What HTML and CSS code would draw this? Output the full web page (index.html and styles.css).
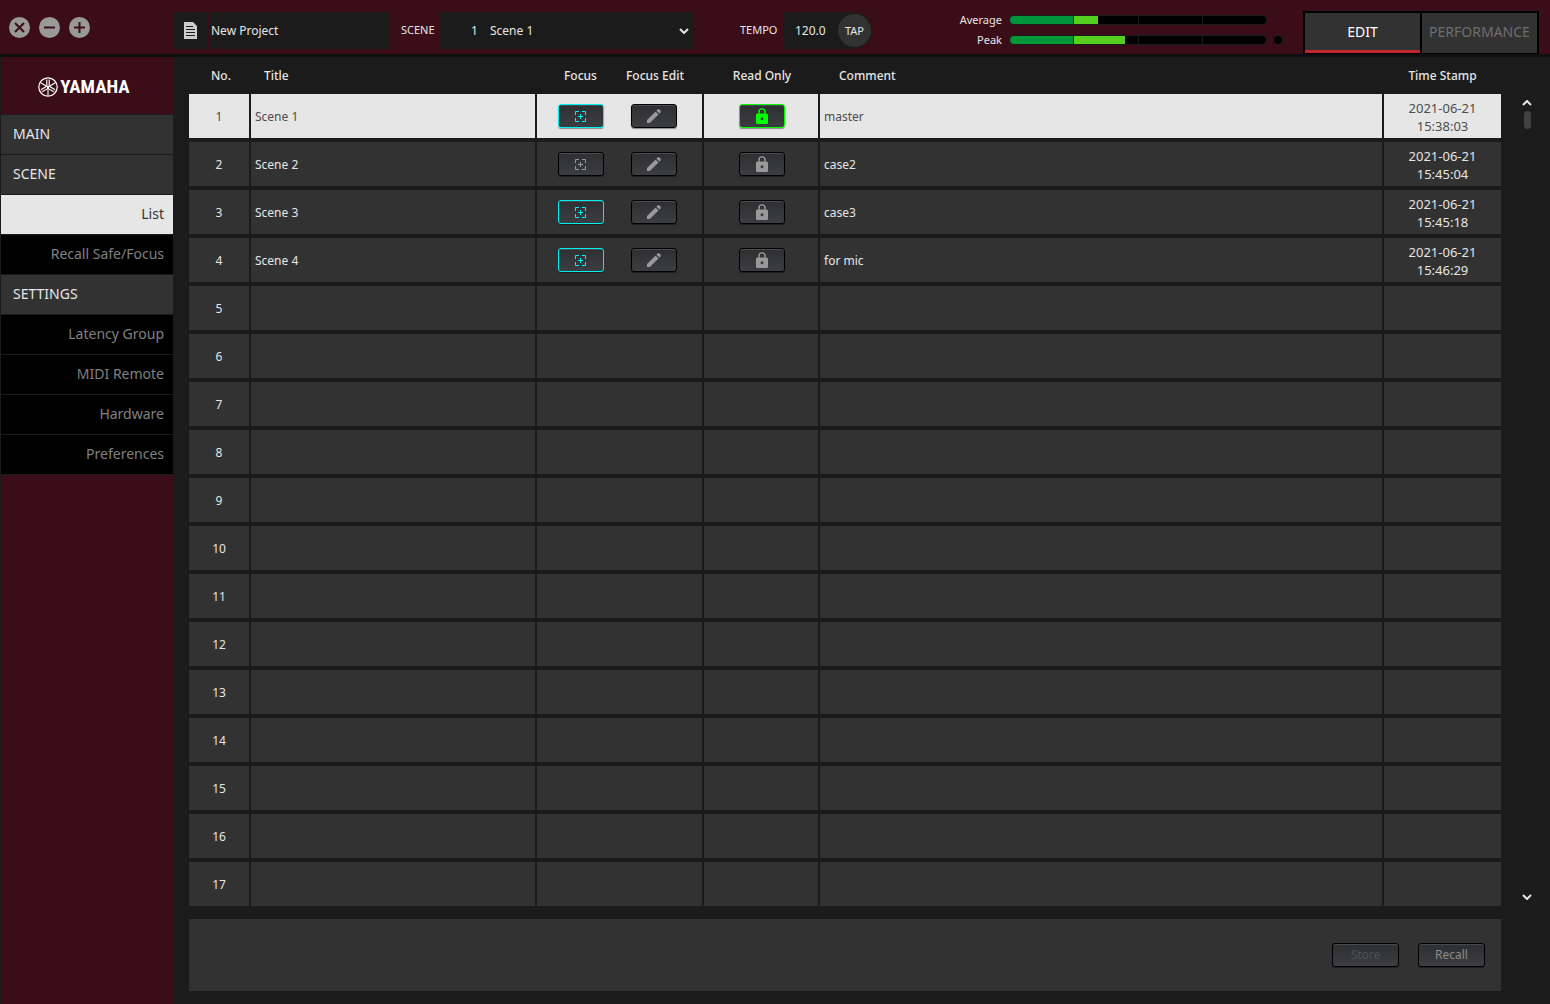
FILE: index.html
```html
<!DOCTYPE html>
<html lang="en">
<head>
<meta charset="utf-8">
<title>Scene List</title>
<link rel="stylesheet" href="styles.css">
</head>
<body>
<svg class="defs" aria-hidden="true">
  <symbol id="focus" viewBox="0 -1 12 12"><path d="M.5 4V.5H4M7 .5h3.500V4M10.500 7v3.500H7M4 10.500H.5V7M5.500 3v5M3 5.500h5" fill="none" stroke="currentColor"/></symbol>
  <symbol id="pen" viewBox="3 3 18 18"><path d="M3 17.250V21h3.750L17.810 9.940l-3.750-3.750zM20.710 7.040a1 1 0 0 0 0-1.410l-2.340-2.340a1 1 0 0 0-1.410 0l-1.830 1.830 3.750 3.750z" fill="currentColor"/></symbol>
  <symbol id="lock" viewBox="4 1 16 21"><path d="M18 8h-1V6A5 5 0 0 0 7 6v2H6a2 2 0 0 0-2 2v10c0 1.100.9 2 2 2h12a2 2 0 0 0 2-2V10a2 2 0 0 0-2-2zm-6 9a2 2 0 1 1 0-4 2 2 0 0 1 0 4zm3.100-9H8.900V6a3.100 3.100 0 0 1 6.200 0z" fill="currentColor"/></symbol>
  <symbol id="down" viewBox="0 0 10 6"><path d="M1 1l4 4 4-4" fill="none" stroke="currentColor" stroke-width="2"/></symbol>
  <symbol id="up" viewBox="0 0 10 6"><path d="M1 5l4-4 4 4" fill="none" stroke="currentColor" stroke-width="2"/></symbol>
  <symbol id="fork" viewBox="0 0 20 20"><path d="M10 10v8.500M8.800 2.500v5.800q0 1.500 1.200 1.500t1.200-1.500V2.500" fill="none" stroke="currentColor" stroke-width="1.100"/></symbol>
</svg>

<header class="topbar">
  <div class="window-controls">
    <button class="round" aria-label="Close"><svg viewBox="0 0 21 21"><path d="M6 6l9 9M15 6l-9 9"/></svg></button>
    <button class="round" aria-label="Minimize"><svg viewBox="0 0 21 21"><path d="M5 10.500h11"/></svg></button>
    <button class="round" aria-label="Maximize"><svg viewBox="0 0 21 21"><path d="M5 10.500h11M10.500 5v11"/></svg></button>
  </div>
  <div class="project">
    <button class="file" aria-label="Project file"><svg viewBox="0 0 13 17"><path d="M0 0h9l4 4v13H0z" fill="#ccc"/><path d="M2 4.500h7M2 7.500h9M2 10.500h9M2 13.500h9" stroke="#1b1b1b"/></svg></button>
    <input class="project-name" type="text" value="New Project" aria-label="Project name">
  </div>
  <label class="bar-label" for="scene">SCENE</label>
  <div class="scene-box">
    <span class="scene-no">1</span>
    <select id="scene"><option>Scene 1</option><option>Scene 2</option><option>Scene 3</option><option>Scene 4</option></select>
    <svg class="chevron"><use href="#down"/></svg>
  </div>
  <label class="bar-label tempo-label" for="tempo">TEMPO</label>
  <div class="tempo-box">
    <input id="tempo" type="text" value="120.0">
    <button class="tap">TAP</button>
  </div>
  <div class="meters">
    <span class="meter-name">Average</span>
    <div class="meter"><i class="seg full"></i><i class="seg"><b style="width:37%"></b></i><i class="seg"></i><i class="seg"></i></div>
    <span></span>
    <span class="meter-name">Peak</span>
    <div class="meter"><i class="seg full"></i><i class="seg"><b style="width:80%"></b></i><i class="seg"></i><i class="seg"></i></div>
    <span class="clip"></span>
  </div>
  <div class="modes">
    <button class="mode active">EDIT</button>
    <button class="mode">PERFORMANCE</button>
  </div>
</header>

<div class="body">
  <nav class="sidebar">
    <div class="logo">
      <svg viewBox="0 0 20 20"><circle cx="10" cy="10" r="9.200" fill="none" stroke="#fff" stroke-width="1.200"/><use href="#fork" width="20" height="20"/><use href="#fork" width="20" height="20" transform="rotate(120 10 10)"/><use href="#fork" width="20" height="20" transform="rotate(240 10 10)"/></svg>
      <span>YAMAHA</span>
    </div>
    <a class="group" href="#">MAIN</a>
    <a class="group" href="#">SCENE</a>
    <a class="item current" href="#">List</a>
    <a class="item" href="#">Recall Safe/Focus</a>
    <a class="group" href="#">SETTINGS</a>
    <a class="item" href="#">Latency Group</a>
    <a class="item" href="#">MIDI Remote</a>
    <a class="item" href="#">Hardware</a>
    <a class="item" href="#">Preferences</a>
  </nav>

  <main class="content">
    <div class="list">
      <table class="scenes">
        <colgroup><col class="c-no"><col class="c-title"><col class="c-focus"><col class="c-edit"><col class="c-ro"><col><col class="c-time"></colgroup>
        <thead>
          <tr><th class="no">No.</th><th class="title">Title</th><th class="focus">Focus</th><th class="edit">Focus Edit</th><th>Read Only</th><th class="comment">Comment</th><th>Time Stamp</th></tr>
        </thead>
        <tbody>
          <tr class="selected"><td>1</td><td class="text">Scene 1</td>
            <td class="focus"><button class="key on" aria-label="Focus"><svg class="i-focus"><use href="#focus"/></svg></button></td>
            <td class="edit"><button class="key" aria-label="Focus edit"><svg class="i-pen"><use href="#pen"/></svg></button></td>
            <td class="read-only"><button class="key locked" aria-label="Read only"><svg class="i-lock"><use href="#lock"/></svg></button></td>
            <td class="text">master</td><td class="last">2021-06-21<br>15:38:03</td></tr>
          <tr><td>2</td><td class="text">Scene 2</td>
            <td class="focus"><button class="key" aria-label="Focus"><svg class="i-focus"><use href="#focus"/></svg></button></td>
            <td class="edit"><button class="key" aria-label="Focus edit"><svg class="i-pen"><use href="#pen"/></svg></button></td>
            <td class="read-only"><button class="key" aria-label="Read only"><svg class="i-lock"><use href="#lock"/></svg></button></td>
            <td class="text">case2</td><td class="last">2021-06-21<br>15:45:04</td></tr>
          <tr><td>3</td><td class="text">Scene 3</td>
            <td class="focus"><button class="key on" aria-label="Focus"><svg class="i-focus"><use href="#focus"/></svg></button></td>
            <td class="edit"><button class="key" aria-label="Focus edit"><svg class="i-pen"><use href="#pen"/></svg></button></td>
            <td class="read-only"><button class="key" aria-label="Read only"><svg class="i-lock"><use href="#lock"/></svg></button></td>
            <td class="text">case3</td><td class="last">2021-06-21<br>15:45:18</td></tr>
          <tr><td>4</td><td class="text">Scene 4</td>
            <td class="focus"><button class="key on" aria-label="Focus"><svg class="i-focus"><use href="#focus"/></svg></button></td>
            <td class="edit"><button class="key" aria-label="Focus edit"><svg class="i-pen"><use href="#pen"/></svg></button></td>
            <td class="read-only"><button class="key" aria-label="Read only"><svg class="i-lock"><use href="#lock"/></svg></button></td>
            <td class="text">for mic</td><td class="last">2021-06-21<br>15:46:29</td></tr>
          <tr><td>5</td><td></td><td class="focus"></td><td></td><td></td><td></td><td class="last"></td></tr>
          <tr><td>6</td><td></td><td class="focus"></td><td></td><td></td><td></td><td class="last"></td></tr>
          <tr><td>7</td><td></td><td class="focus"></td><td></td><td></td><td></td><td class="last"></td></tr>
          <tr><td>8</td><td></td><td class="focus"></td><td></td><td></td><td></td><td class="last"></td></tr>
          <tr><td>9</td><td></td><td class="focus"></td><td></td><td></td><td></td><td class="last"></td></tr>
          <tr><td>10</td><td></td><td class="focus"></td><td></td><td></td><td></td><td class="last"></td></tr>
          <tr><td>11</td><td></td><td class="focus"></td><td></td><td></td><td></td><td class="last"></td></tr>
          <tr><td>12</td><td></td><td class="focus"></td><td></td><td></td><td></td><td class="last"></td></tr>
          <tr><td>13</td><td></td><td class="focus"></td><td></td><td></td><td></td><td class="last"></td></tr>
          <tr><td>14</td><td></td><td class="focus"></td><td></td><td></td><td></td><td class="last"></td></tr>
          <tr><td>15</td><td></td><td class="focus"></td><td></td><td></td><td></td><td class="last"></td></tr>
          <tr><td>16</td><td></td><td class="focus"></td><td></td><td></td><td></td><td class="last"></td></tr>
          <tr><td>17</td><td></td><td class="focus"></td><td></td><td></td><td></td><td class="last"></td></tr>
        </tbody>
      </table>
      <div class="scroll">
        <button class="arrow" aria-label="Scroll up"><svg><use href="#up"/></svg></button>
        <span class="thumb"></span>
        <button class="arrow end" aria-label="Scroll down"><svg><use href="#down"/></svg></button>
      </div>
    </div>
    <footer class="actions">
      <button class="key wide" disabled>Store</button>
      <button class="key wide">Recall</button>
    </footer>
  </main>
</div>
</body>
</html>
```
FILE: styles.css
```css
* { box-sizing: border-box; }

body {
  margin: 0;
  min-height: 100vh;
  display: flex;
  flex-direction: column;
  background: #1b1b1b;
  color: #e6e6e6;
  font: 12px/18px "Noto Sans", "Open Sans", sans-serif;
}

button, input, select {
  font: inherit;
  color: inherit;
  border: 0;
  padding: 0;
  margin: 0;
  background: none;
}

a { color: inherit; text-decoration: none; }
svg { display: block; }
.defs { position: absolute; width: 0; height: 0; }

/* Top bar */
.topbar {
  display: flex;
  align-items: flex-start;
  height: 57px;
  padding: 11px 11px 0 9px;
  background: #3b0d18;
  border-bottom: 3px solid #0f0f0f;
}

.window-controls { display: flex; gap: 9px; width: 164px; padding-top: 6px; }
.round { width: 21px; height: 21px; border-radius: 50%; background: #999; }
.round svg { width: 21px; height: 21px; fill: none; stroke: #3b0d18; stroke-width: 2; }

.project, .scene-box, .bar-label, .tempo-box { margin-top: 1px; }

.project { display: flex; gap: 2px; width: 216px; height: 37px; }
.file { display: grid; place-items: center; width: 35px; background: #1b1b1b; }
.file svg { width: 13px; height: 17px; }
.project-name { flex: 1; min-width: 0; padding-left: 1px; background: #1b1b1b; }

.bar-label { width: 51px; padding-left: 12px; line-height: 36px; font-size: 11px; }
.scene-box {
  display: flex;
  align-items: center;
  width: 253px;
  height: 37px;
  padding-right: 4px;
  background: #1b1b1b;
}
.scene-no { width: 50px; padding-left: 31px; }
#scene { flex: 1; appearance: none; }
.chevron { width: 10px; height: 6px; }

.tempo-label { width: 90px; padding-left: 47px; }
.tempo-box {
  display: flex;
  align-items: center;
  justify-content: space-between;
  width: 89px;
  height: 37px;
  padding: 0 1px 0 12px;
  background: #1b1b1b;
  border-radius: 0 19px 19px 0;
}
#tempo { width: 40px; }
.tap { width: 33px; height: 33px; border-radius: 50%; background: #323232; font-size: 11px; }

.meters {
  display: grid;
  grid-template-columns: auto 256px 8px;
  gap: 2px 8px;
  align-items: center;
  margin-left: auto;
}
.meter-name { text-align: right; font-size: 11px; }
.meter {
  display: flex;
  gap: 1px;
  height: 8px;
  border-radius: 4px;
  overflow: hidden;
  background: #1b1b1b;
  box-shadow: 0 0 0 1px #1b1b1b;
}
.seg { flex: 1; background: #000; }
.seg b { display: block; height: 8px; background: #57cf1f; }
.seg.full { background: #00953b; }
.clip { width: 8px; height: 8px; border-radius: 50%; background: #000; box-shadow: 0 0 0 1px #1b1b1b; }

.modes {
  display: flex;
  gap: 2px;
  width: 236px;
  height: 43px;
  margin-left: 21px;
  padding: 2px 2px 1px;
  background: #000;
}
.mode { flex: 1 1 0; min-width: 0; background: #323232; border-bottom: 3px solid #323232; font-size: 14px; color: #6e6e6e; }
.mode.active { border-color: #c1272d; color: #fff; }

/* Body */
.body { flex: 1; display: flex; }

.sidebar {
  display: flex;
  flex-direction: column;
  gap: 1px;
  width: 174px;
  padding-right: 1px;
  border-left: 1px solid #1b1b1b;
  background: #3b0d18;
}
.logo {
  display: flex;
  align-items: center;
  justify-content: center;
  gap: 2px;
  height: 57px;
  padding: 2px 6px 0 0;
  color: #fff;
  font: bold 19px/20px "Roboto Condensed", "Liberation Sans Narrow", sans-serif;
}
.logo svg { width: 20px; height: 20px; }
.sidebar a { height: 39px; line-height: 38px; font-size: 14px; box-shadow: 0 0 0 1px #1b1b1b; }
.group { padding-left: 12px; background: #323232; }
.item { padding-right: 9px; text-align: right; color: #808080; background: #000; }
.sidebar .current { color: #323232; background: #e6e6e6; }

.content { flex: 1; min-width: 0; padding: 0 0 13px 15px; }
.list { display: flex; }

.scenes { flex: 1; width: 0; table-layout: fixed; border-spacing: 0; text-align: center; }
.c-no { width: 62px; }
.c-title { width: 286px; }
.c-focus { width: 80px; }
.c-edit { width: 87px; }
.c-ro { width: 116px; }
.c-time { width: 117px; }

.scenes th { height: 37px; padding: 0; font-weight: 500; white-space: nowrap; }
.scenes th.no { padding-left: 2px; }
.scenes th.title { padding-left: 13px; text-align: left; }
.scenes th.comment { padding-left: 19px; text-align: left; }
.scenes td {
  height: 48px;
  padding: 2px 0 0;
  background: #323232;
  border: solid #1b1b1b;
  border-width: 0 2px 4px 0;
}
.scenes td.text { padding-left: 4px; text-align: left; }
.scenes td.last { border-right: 0; font-size: 13px; }
.scenes td.focus { padding-top: 0; border-right: 0; }
.scenes td.edit { padding-top: 0; }
.scenes td.read-only { padding: 0 0 0 2px; }
.scenes .focus { padding-left: 7px; }
.scenes .edit { padding-right: 11px; }
.selected td { background: #e6e6e6; color: #4d4d4d; }

/* Raised keys */
.key {
  display: inline-grid;
  place-items: center;
  width: 46px;
  height: 24px;
  vertical-align: middle;
  color: #999;
  background: linear-gradient(#2e2f31, #3c3d40);
  border: 1px solid #000;
  border-radius: 3px;
  box-shadow: inset 0 1px #4b4b4d, 0 1px 1px #0006;
}
.on { color: #00f0f5; border-color: #00f0f5; }
.locked { color: #0f0; border-color: #0f0; }
.i-focus { width: 12px; height: 12px; }
.i-pen { width: 14px; height: 14px; }
.i-lock { width: 12px; height: 16px; }

.scroll { display: flex; flex-direction: column; align-items: center; width: 49px; padding: 42px 0 9px 3px; }
.arrow { width: 10px; height: 8px; }
.arrow svg { width: 10px; height: 6px; }
.thumb { width: 7px; height: 18px; margin-top: 4px; border-radius: 4px; background: #404040; }
.end { margin-top: auto; }

.actions {
  display: flex;
  align-items: center;
  justify-content: flex-end;
  gap: 19px;
  height: 72px;
  margin: 9px 49px 0 0;
  padding-right: 16px;
  background: #323232;
}
.wide { width: 67px; color: #8c8c8c; }
.wide:disabled { color: #505050; }
```
